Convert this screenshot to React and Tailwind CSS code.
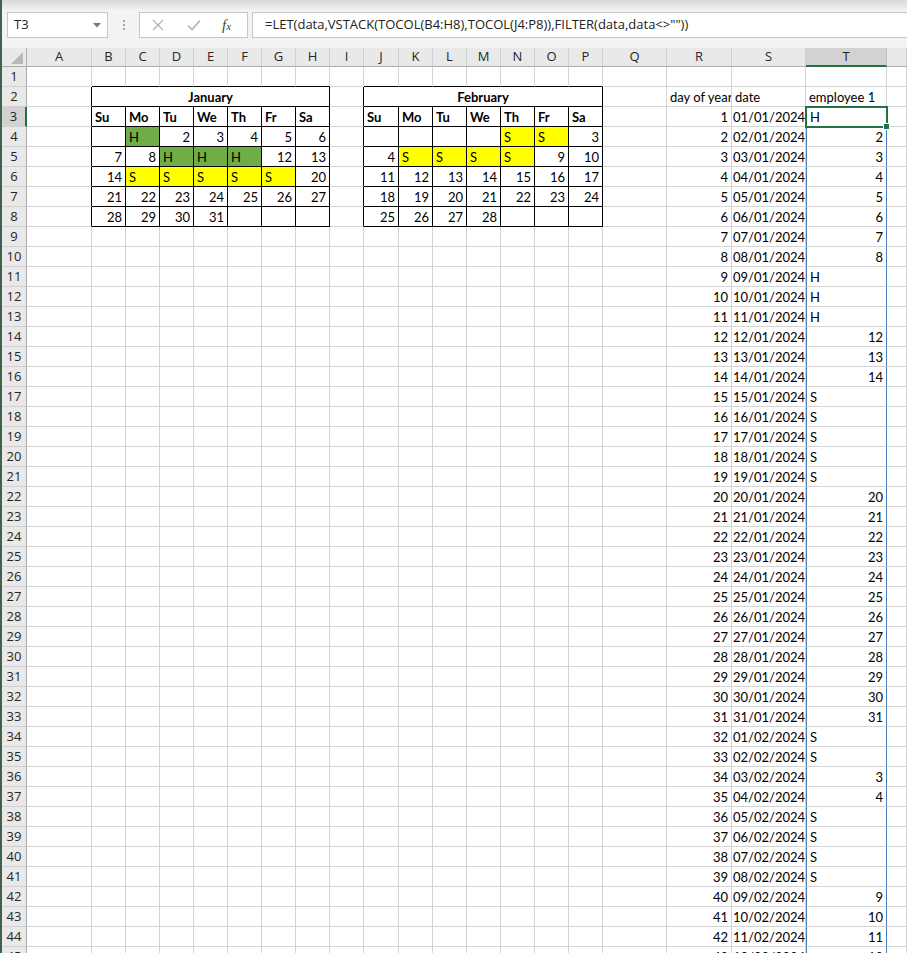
import React from 'react';

const COLS = ['A','B','C','D','E','F','G','H','I','J','K','L','M','N','O','P','Q','R','S','T','U'];
const W = {
  A: 'w-[65px]', B: 'w-[34px]', C: 'w-[34px]', D: 'w-[34px]', E: 'w-[34px]', F: 'w-[34px]', G: 'w-[34px]',
  H: 'w-[34px]', I: 'w-[34px]', J: 'w-[35px]', K: 'w-[34px]', L: 'w-[34px]', M: 'w-[34px]', N: 'w-[34px]',
  O: 'w-[34px]', P: 'w-[34px]', Q: 'w-[64px]', R: 'w-[65px]', S: 'w-[74px]', T: 'w-[81px]', U: 'w-[20px]',
};

const DAYS = ['Su', 'Mo', 'Tu', 'We', 'Th', 'Fr', 'Sa'];
const JAN = [
  ['', 'H', 2, 3, 4, 5, 6],
  [7, 8, 'H', 'H', 'H', 12, 13],
  [14, 'S', 'S', 'S', 'S', 'S', 20],
  [21, 22, 23, 24, 25, 26, 27],
  [28, 29, 30, 31, '', '', ''],
];
const FEB = [
  ['', '', '', '', 'S', 'S', 3],
  [4, 'S', 'S', 'S', 'S', 9, 10],
  [11, 12, 13, 14, 15, 16, 17],
  [18, 19, 20, 21, 22, 23, 24],
  [25, 26, 27, 28, '', '', ''],
];

const SERIES = [...JAN.flat(), ...FEB.flat()].filter((v) => v !== '');

const inCal = (r, c) => r >= 2 && r <= 8 && ((c >= 1 && c <= 7) || (c >= 9 && c <= 15));

const pad = (n) => String(n).padStart(2, '0');
function dateFor(day) {
  const d = new Date(2024, 0, day);
  return `${pad(d.getDate())}/${pad(d.getMonth() + 1)}/${d.getFullYear()}`;
}

const CELL_FONT = "[font-family:Lato,'Liberation_Sans',sans-serif] text-[13px] leading-[20px] text-black";
const HEAD_FONT = "[font-family:'Open_Sans','Liberation_Sans',sans-serif] text-[13px] text-[#262626]";

function getContent(r, c) {
  if (inCal(r, c)) {
    const cal = c <= 7 ? JAN : FEB;
    const idx = c <= 7 ? c - 1 : c - 9;
    if (r === 3) return { text: DAYS[idx], bold: true, align: 'left' };
    if (r >= 4) {
      const v = cal[r - 4][idx];
      if (v === 'H') return { text: 'H', align: 'left', bg: 'bg-[#70ad47]' };
      if (v === 'S') return { text: 'S', align: 'left', bg: 'bg-[#ffff00]' };
      return { text: v === '' ? '' : String(v), align: 'right' };
    }
  }
  if (r === 2) {
    if (c === 17) return { text: 'day of year', align: 'left' };
    if (c === 18) return { text: 'date', align: 'left' };
    if (c === 19) return { text: 'employee 1', align: 'left' };
  }
  if (r >= 3) {
    const day = r - 2;
    if (c === 17) return { text: String(day), align: 'right' };
    if (c === 18) return { text: dateFor(day), align: 'right', tight: true };
    if (c === 19) {
      const v = SERIES[day - 1];
      if (typeof v === 'number') return { text: String(v), align: 'right' };
      return { text: v, align: 'left' };
    }
  }
  return { text: '', align: 'left' };
}

function Cell({ r, c }) {
  const col = COLS[c];
  const { text, bold, align, bg, tight } = getContent(r, c);
  const blueCol = c === 19 && r >= 3;
  const rightCls = blueCol
    ? 'border-r-[#4a7ebb]'
    : inCal(r, c) || inCal(r, c + 1)
    ? 'border-r-black'
    : 'border-r-[#d4d4d4]';
  const bottomCls = inCal(r, c) || inCal(r + 1, c) ? 'border-b-black' : 'border-b-[#d4d4d4]';
  return (
    <div
      className={`relative shrink-0 h-[20px] border-r border-b ${W[col]} ${rightCls} ${bottomCls} ${
        blueCol ? 'border-l border-l-[#4a7ebb]' : ''
      } ${bg || 'bg-white'}`}
    >
      <div
        className={`${CELL_FONT} h-full overflow-hidden whitespace-nowrap ${tight ? 'px-[1px]' : 'px-[3px]'} ${
          align === 'right' ? 'text-right' : 'text-left'
        } ${bold ? 'font-bold' : ''}`}
      >
        {text}
      </div>
      {r === 3 && c === 19 && (
        <div className="absolute -left-[2px] -top-[1px] w-[83px] h-[22px] border-2 border-[#217346] z-10">
          <div className="absolute -right-[4px] -bottom-[4px] w-[7px] h-[7px] bg-[#217346] border border-white" />
        </div>
      )}
    </div>
  );
}

function TitleCell({ title, w }) {
  return (
    <div className={`shrink-0 h-[20px] border-r border-b border-r-black border-b-black bg-white ${w}`}>
      <div className={`${CELL_FONT} font-bold text-center h-full`}>{title}</div>
    </div>
  );
}

function Row({ r }) {
  const cells = [];
  for (let c = 0; c < COLS.length; c++) {
    if (r === 2 && c === 1) {
      cells.push(<TitleCell key="jan" title="January" w="w-[238px]" />);
      c += 6;
      continue;
    }
    if (r === 2 && c === 9) {
      cells.push(<TitleCell key="feb" title="February" w="w-[239px]" />);
      c += 6;
      continue;
    }
    cells.push(<Cell key={c} r={r} c={c} />);
  }
  const sel = r === 3;
  return (
    <div className="flex h-[20px]">
      <div
        className={`shrink-0 w-[25px] h-[20px] border-b border-b-[#d0d0d0] flex items-center justify-center ${HEAD_FONT} ${
          sel ? 'bg-[#d2d2d2] border-r-2 border-r-[#217346]' : 'bg-[#e9e9e9] border-r border-r-[#ababab]'
        }`}
      >
        {r}
      </div>
      {cells}
    </div>
  );
}

function ColumnHeaders() {
  return (
    <div className="flex h-[19px]">
      <div className="relative shrink-0 w-[25px] h-[19px] bg-[#e9e9e9] border-r border-b border-r-[#ababab] border-b-[#ababab]">
        <svg className="absolute right-[3px] bottom-[2px]" width="12" height="12" viewBox="0 0 12 12">
          <polygon points="12,0 12,12 0,12" fill="#b9b9b9" />
        </svg>
      </div>
      {COLS.map((col) => {
        const sel = col === 'T';
        return (
          <div
            key={col}
            className={`shrink-0 h-[19px] flex items-center justify-center border-r ${W[col]} ${HEAD_FONT} ${
              sel
                ? 'bg-[#d2d2d2] border-r-[#c0c0c0] border-b-2 border-b-[#217346] text-[#1e5d38]'
                : 'bg-[#e9e9e9] border-r-[#d0d0d0] border-b border-b-[#ababab]'
            }`}
          >
            {col === 'U' ? '' : col}
          </div>
        );
      })}
    </div>
  );
}

function FormulaBar() {
  return (
    <div className="relative h-[48px] bg-[#f3f3f3] overflow-hidden">
      <div className="absolute left-0 right-0 top-0 h-[10px] bg-gradient-to-b from-[#d9d9d9] to-[#f1f1f1]" />
      <div className="relative flex items-start pt-[12px] pl-[5px]">
        <div className="shrink-0 w-[101px] h-[26px] bg-white border border-[#c6c6c6] flex items-center justify-between pl-[6px] pr-[6px]">
          <span className="[font-family:'Open_Sans','Liberation_Sans',sans-serif] text-[13px] text-[#222]">T3</span>
          <svg width="8" height="5" viewBox="0 0 8 5">
            <polygon points="0,0 8,0 4,4.5" fill="#7a7a7a" />
          </svg>
        </div>
        <div className="shrink-0 w-[31px] h-[26px] flex flex-col items-center justify-center gap-[2px]">
          <div className="w-[2px] h-[2px] bg-[#a6a6a6]" />
          <div className="w-[2px] h-[2px] bg-[#a6a6a6]" />
          <div className="w-[2px] h-[2px] bg-[#a6a6a6]" />
        </div>
        <div className="shrink-0 w-[109px] h-[26px] bg-white border border-[#c6c6c6] flex items-center">
          <svg className="ml-[12px]" width="12" height="12" viewBox="0 0 12 12">
            <path d="M1 1 L11 11 M11 1 L1 11" stroke="#b3b3b3" strokeWidth="1.3" fill="none" />
          </svg>
          <svg className="ml-[23px]" width="14" height="12" viewBox="0 0 14 12">
            <path d="M1 6.5 L5 10.5 L13 1.5" stroke="#b3b3b3" strokeWidth="1.6" fill="none" />
          </svg>
          <span className="ml-[21px] [font-family:'Liberation_Serif',serif] italic text-[15px] text-[#444] leading-none">
            f<span className="text-[11px]">x</span>
          </span>
        </div>
        <div className="ml-[4px] flex-1 h-[26px] bg-white border border-[#c6c6c6] border-r-0 flex items-center pl-[12px]">
          <span className="[font-family:'Open_Sans','Liberation_Sans',sans-serif] text-[13px] text-[#222] whitespace-nowrap">
            =LET(data,VSTACK(TOCOL(B4:H8),TOCOL(J4:P8)),FILTER(data,data&lt;&gt;""))
          </span>
        </div>
      </div>
    </div>
  );
}

export default function App() {
  const rows = [];
  for (let r = 1; r <= 45; r++) rows.push(<Row key={r} r={r} />);
  return (
    <div className="w-[907px] h-[953px] overflow-hidden flex bg-white">
      <div className="shrink-0 w-[2px] h-full bg-[#41634d]" />
      <div className="flex-1 min-w-0 overflow-hidden">
        <FormulaBar />
        <ColumnHeaders />
        {rows}
      </div>
    </div>
  );
}
